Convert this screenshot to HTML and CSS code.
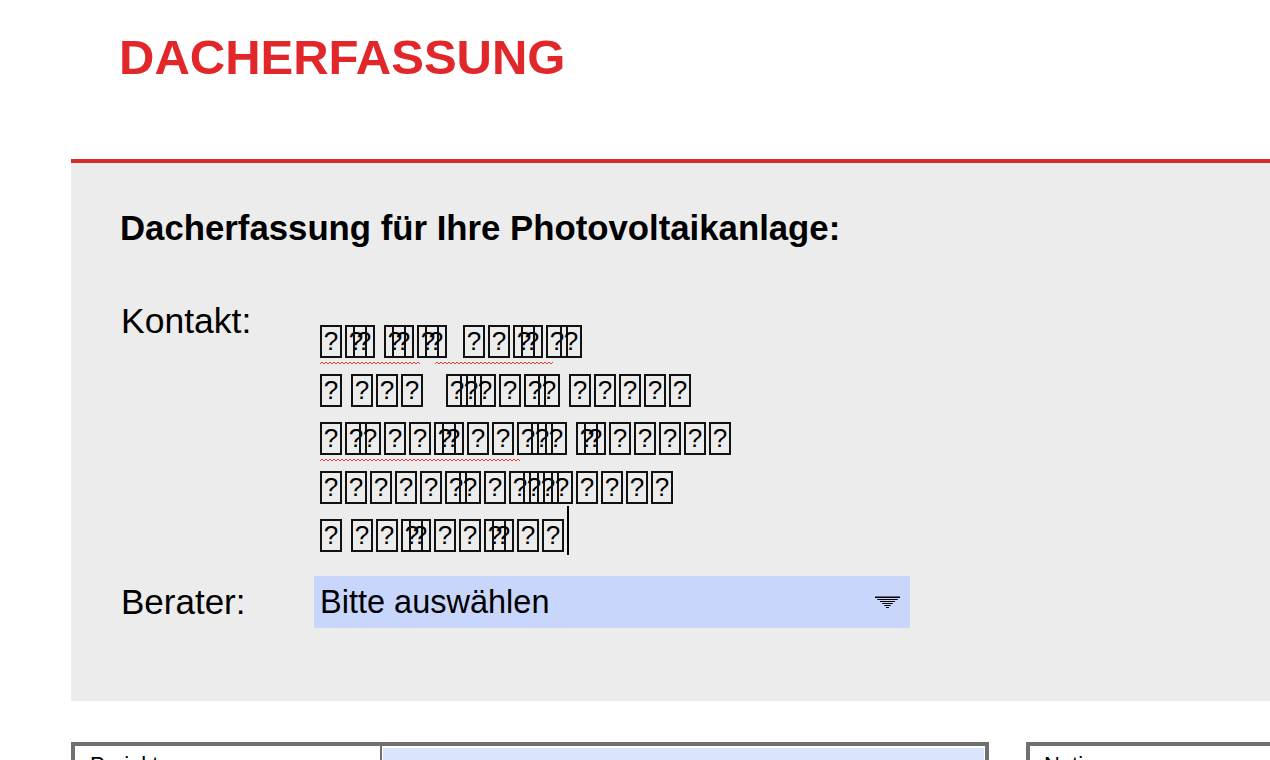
FILE: index.html
```html
<!DOCTYPE html>
<html lang="de">
<head>
<meta charset="utf-8">
<title>Dacherfassung</title>
<link rel="stylesheet" href="styles.css">
</head>
<body>
<svg class="defs" width="0" height="0" aria-hidden="true"><defs><pattern id="zz" width="4" height="4" patternUnits="userSpaceOnUse"><path d="M0 3 L2 1 L4 3" fill="none" stroke="#ec3b35" stroke-width="1"/></pattern></defs></svg>

<header class="top">
  <h1 class="title">DACHERFASSUNG</h1>
</header>

<main class="panel">
  <h2 class="heading">Dacherfassung für Ihre Photovoltaikanlage:</h2>

  <div class="row row-contact">
    <div class="label">Kontakt:</div>
    <div class="textarea">
      <div class="ln">
        <span class="b">?</span><span class="g g2a"><span class="b">?</span><span class="b">?</span></span>
        <span class="sp"></span>
        <span class="g g2a"><span class="b">?</span><span class="b">?</span></span><span class="g g2a"><span class="b">?</span><span class="b">?</span></span>
        <span class="sp w"></span>
        <span class="b">?</span><span class="b">?</span><span class="g g2a"><span class="b">?</span><span class="b">?</span></span><span class="g g2"><span class="b">?</span><span class="b">?</span></span>
        <svg class="sq sq1a" height="4"><rect width="100%" height="4" fill="url(#zz)"/></svg>
        <svg class="sq sq1b" height="4"><rect width="100%" height="4" fill="url(#zz)"/></svg>
      </div>
      <div class="ln">
        <span class="b">?</span>
        <span class="sp"></span>
        <span class="b">?</span><span class="b">?</span><span class="b">?</span>
        <span class="sp ww"></span>
        <span class="g g3"><span class="b">?</span><span class="b">?</span><span class="b">?</span></span><span class="b">?</span><span class="g g2"><span class="b">?</span><span class="b">?</span></span>
        <span class="sp"></span>
        <span class="b">?</span><span class="b">?</span><span class="b">?</span><span class="b">?</span><span class="b">?</span>
      </div>
      <div class="ln">
        <span class="b">?</span><span class="g g2"><span class="b">?</span><span class="b">?</span></span><span class="b">?</span><span class="b">?</span><span class="g g2n"><span class="b">?</span><span class="b">?</span></span><span class="b">?</span><span class="b">?</span><span class="g g3"><span class="b">?</span><span class="b">?</span><span class="b">?</span></span>
        <span class="sp"></span>
        <span class="g g2a"><span class="b">?</span><span class="b">?</span></span><span class="b">?</span><span class="b">?</span><span class="b">?</span><span class="b">?</span><span class="b">?</span>
        <svg class="sq sq3" height="4"><rect width="100%" height="4" fill="url(#zz)"/></svg>
      </div>
      <div class="ln">
        <span class="b">?</span><span class="b">?</span><span class="b">?</span><span class="b">?</span><span class="b">?</span><span class="g g2"><span class="b">?</span><span class="b">?</span></span><span class="b">?</span><span class="g g4"><span class="b">?</span><span class="b">?</span><span class="b">?</span><span class="b">?</span></span><span class="b">?</span><span class="b">?</span><span class="b">?</span><span class="b">?</span>
      </div>
      <div class="ln">
        <span class="b">?</span>
        <span class="sp"></span>
        <span class="b">?</span><span class="b">?</span><span class="g g2a"><span class="b">?</span><span class="b">?</span></span><span class="b">?</span><span class="b">?</span><span class="g g2a"><span class="b">?</span><span class="b">?</span></span><span class="b">?</span><span class="b">?</span><span class="caret"></span>
      </div>
    </div>
  </div>

  <div class="row row-select">
    <div class="label label-select">Berater:</div>
    <div class="select">
      <span class="select-text">Bitte auswählen</span>
      <svg class="arrow" width="25" height="12" viewBox="0 0 25 12" aria-hidden="true">
        <rect x="0" y="0.5" width="25" height="1.5" fill="#000"/>
        <rect x="2.3" y="3" width="20.4" height="1" fill="#000"/>
        <rect x="5" y="5" width="15" height="1" fill="#000"/>
        <rect x="7.3" y="7" width="10.4" height="1" fill="#000"/>
        <rect x="9.3" y="9" width="6.4" height="1" fill="#000"/>
        <rect x="11" y="11" width="3" height="1" fill="#000"/>
      </svg>
    </div>
  </div>
</main>

<section class="bottom">
  <div class="tbl">
    <div class="cell-label">Projekt:</div>
    <div class="cell-divider"></div>
    <div class="cell-input"></div>
  </div>
  <div class="note">
    <div class="note-label">Notizen:</div>
  </div>
</section>
</body>
</html>
```

FILE: styles.css
```css
html {
  overflow: hidden;
}

body {
  margin: 0;
  background: #ffffff;
  font-family: "Liberation Sans", Arial, sans-serif;
  color: #000;
}

.defs {
  position: absolute;
  width: 0;
  height: 0;
}

.top {
  box-sizing: border-box;
  height: 159px;
  padding: 28px 0 0 119px;
}

.title {
  margin: 0;
  font-size: 49px;
  line-height: 58px;
  font-weight: bold;
  color: #e2272b;
  letter-spacing: 0;
}

.panel {
  display: block;
  margin-left: 71px;
  background: #ececec;
  border-top: 4px solid #d42b2b;
  padding: 45px 0 73px 49px;
}

.heading {
  margin: 0;
  font-size: 34.75px;
  line-height: 40px;
  font-weight: bold;
}

.row {
  display: flex;
  align-items: flex-start;
}

.row-contact {
  margin-top: 53px;
}

.row-select {
  margin-top: 17.5px;
}

.label {
  width: 194px;
  flex: 0 0 194px;
  font-size: 35.5px;
  line-height: 40px;
  padding-left: 1px;
  box-sizing: border-box;
}

.label-select {
  font-size: 35px;
  line-height: 52px;
}

.textarea {
  padding: 15px 0 0 6px;
}

.ln {
  position: relative;
  display: flex;
  align-items: flex-start;
  gap: 3px;
  height: 48.5px;
}

.g {
  display: flex;
  align-items: flex-start;
}

.b {
  box-sizing: border-box;
  display: block;
  width: 22px;
  height: 33px;
  margin-top: 9px;
  border: 2px solid #111;
  font-size: 26px;
  line-height: 29px;
  text-align: center;
  color: #000;
}

.g2 .b + .b,
.g3 .b + .b,
.g4 .b + .b {
  margin-left: -8px;
}

.g2a .b + .b,
.g2n .b + .b {
  margin-left: -14px;
}

.sp {
  width: 3px;
}

.sp.w {
  width: 10px;
}

.sp.ww {
  width: 17px;
}

.caret {
  width: 2px;
  height: 49px;
  margin-top: -4px;
  background: #000;
}

.sq {
  position: absolute;
  top: 45px;
}

.sq1a {
  left: 0;
  width: 100px;
}

.sq1b {
  left: 115px;
  width: 118px;
}

.sq3 {
  left: 0;
  width: 200px;
}

.select {
  box-sizing: border-box;
  width: 596px;
  height: 52px;
  background: #c9d6fc;
  display: flex;
  align-items: center;
  justify-content: space-between;
  padding: 0 10px 0 6px;
}

.select-text {
  font-size: 32.5px;
  line-height: 52px;
}

.arrow {
  display: block;
}

.bottom {
  display: flex;
  align-items: flex-start;
  margin: 41px 0 0 71px;
}

.tbl {
  box-sizing: border-box;
  flex: 0 0 918px;
  height: 90px;
  border: 4px solid #707070;
  border-bottom: 0;
  display: flex;
  padding: 2px 1px 0 0;
}

.cell-label {
  width: 305px;
  flex: 0 0 305px;
  box-sizing: border-box;
  padding: 4px 0 0 15px;
  font-size: 22px;
  line-height: 26px;
}

.cell-divider {
  width: 2px;
  margin-top: -2px;
  background: #707070;
}

.cell-input {
  flex: 1;
  margin-left: 1px;
  background: #dbe4fd;
}

.note {
  box-sizing: border-box;
  flex: 0 0 400px;
  margin-left: 37px;
  height: 90px;
  border: 4px solid #707070;
  border-bottom: 0;
  padding: 6px 0 0 14px;
}

.note-label {
  font-size: 22px;
  line-height: 26px;
}
```
